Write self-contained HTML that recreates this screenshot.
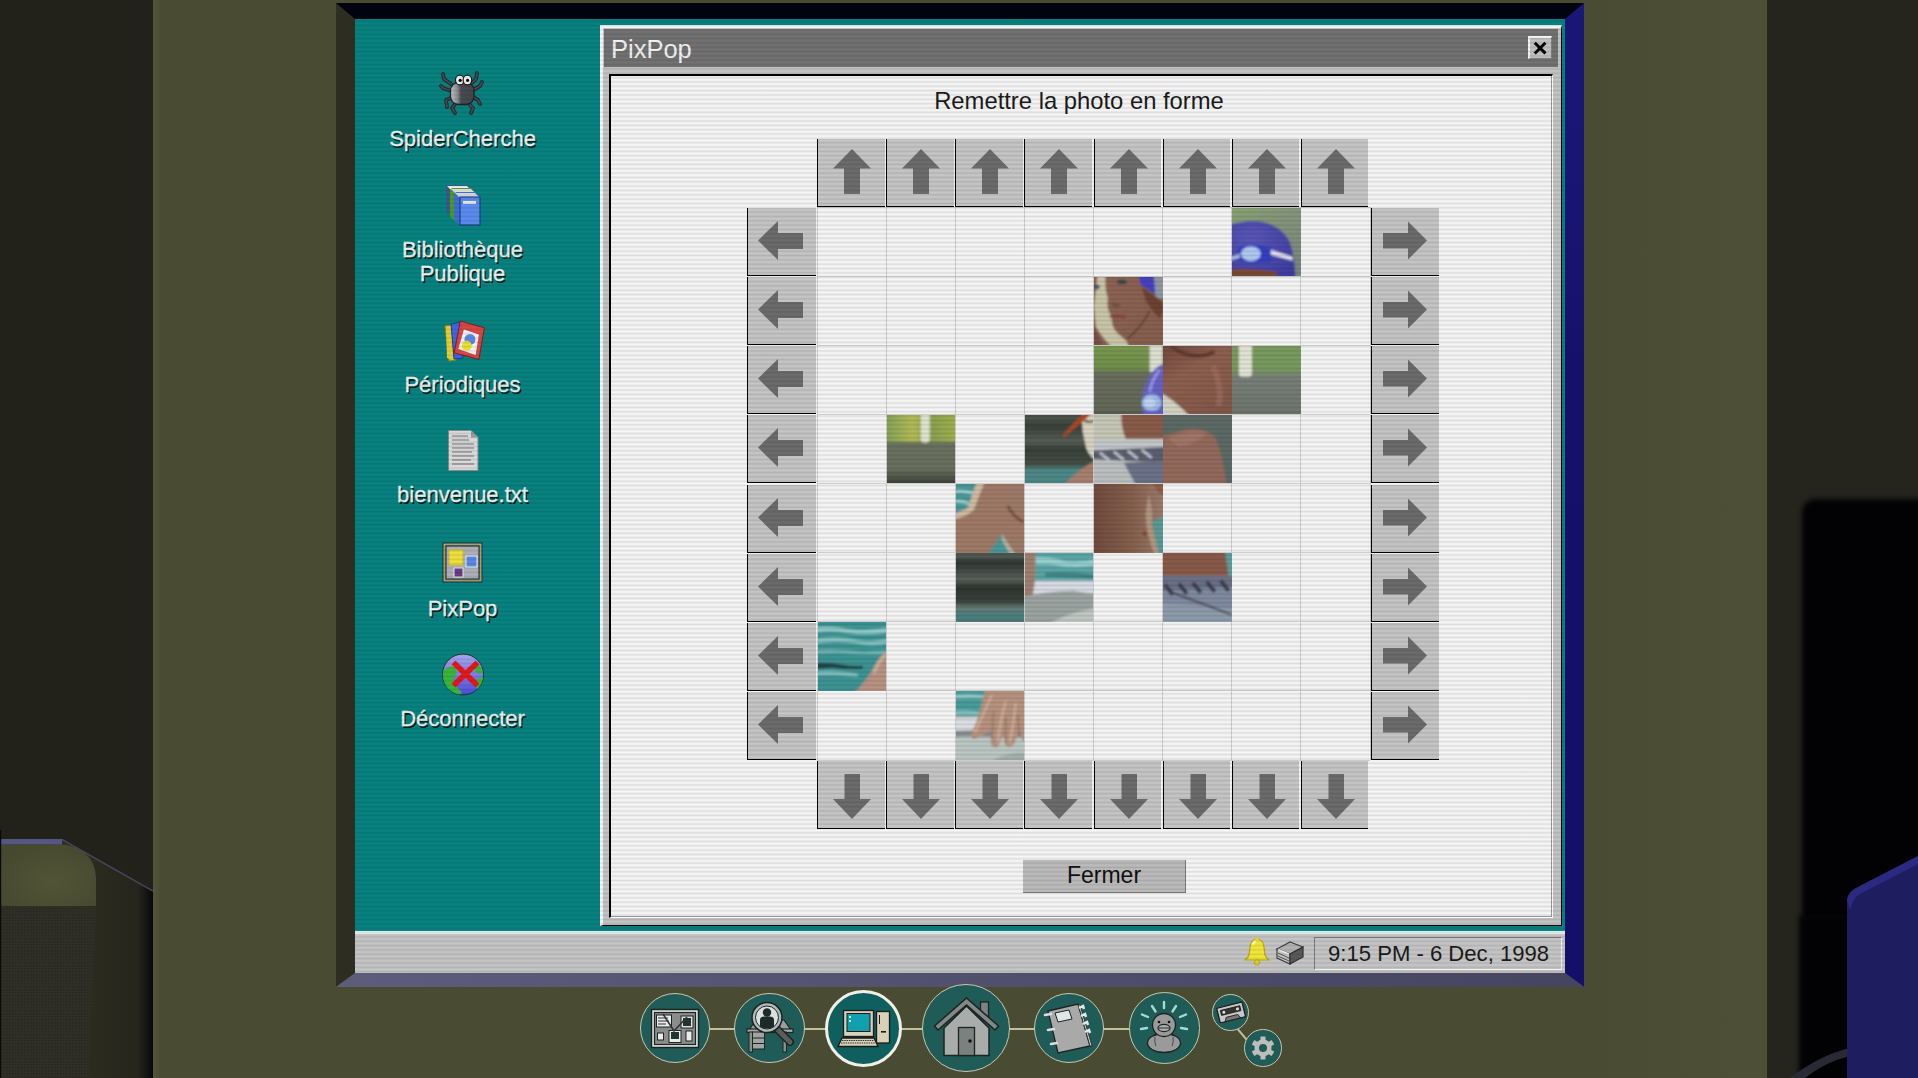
<!DOCTYPE html><html><head><meta charset="utf-8"><style>
*{margin:0;padding:0;box-sizing:border-box}
html,body{width:1918px;height:1078px;overflow:hidden;background:#4a4b33;font-family:"Liberation Sans",sans-serif}
.abs{position:absolute}
.scan-teal{background:#078381}
.scan-white{background:#f6f6f6}
.scan-gray{background:#c6c6c6}
.btn{position:absolute;border-left:1px solid #000;border-bottom:1.5px solid #000;}
.btn svg{position:absolute;left:0;top:0}
.lbl{position:absolute;color:#eef4f2;font-size:22px;text-align:center;white-space:nowrap;text-shadow:1.5px 1.5px 0.5px #042220;line-height:24px;-webkit-text-stroke:0.3px #eef6f2}
</style></head><body>
<div class="abs" style="left:0;top:0;width:153px;height:1078px;background:#22221a"></div>
<div class="abs" style="left:153px;top:0;width:8px;height:1078px;background:linear-gradient(90deg,#53553b,#4a4b33)"></div>
<div class="abs" style="left:1584px;top:0;width:183px;height:1078px;background:linear-gradient(90deg,#4a4b33,#4e4f37)"></div>
<div class="abs" style="left:1767px;top:0;width:151px;height:1078px;background:#25251d"></div>
<div class="abs" style="left:336px;top:3px;width:1248px;height:16px;background:#02030f"></div>
<div class="abs" style="left:336px;top:3px;width:19px;height:984px;background:#2d2d21;clip-path:polygon(0 0,100% 16px,100% calc(100% - 14px),0 100%)"></div>
<div class="abs" style="left:1565px;top:3px;width:19px;height:984px;background:linear-gradient(180deg,#1b1778,#15116a 40%,#14106a);clip-path:polygon(100% 0,100% 100%,0 calc(100% - 14px),0 16px)"></div>
<div class="abs" style="left:336px;top:973px;width:1248px;height:14px;background:linear-gradient(90deg,#5d5d7b,#46445f);clip-path:polygon(19px 0,calc(100% - 19px) 0,100% 100%,0 100%)"></div>
<div class="abs scan-teal" style="left:355px;top:19px;width:1210px;height:954px"></div>
<div class="lbl" style="left:362.5px;top:126.9px;width:200px">SpiderCherche</div>
<div class="lbl" style="left:362.5px;top:237.9px;width:200px">Bibliothèque</div>
<div class="lbl" style="left:362.5px;top:261.9px;width:200px">Publique</div>
<div class="lbl" style="left:362.5px;top:372.9px;width:200px">Périodiques</div>
<div class="lbl" style="left:362.5px;top:482.9px;width:200px">bienvenue.txt</div>
<div class="lbl" style="left:362.5px;top:596.6px;width:200px">PixPop</div>
<div class="lbl" style="left:362.5px;top:706.6px;width:200px">Déconnecter</div>
<svg class="abs" style="left:430px;top:65px" width="65" height="55" viewBox="430 65 65 55">
<defs><linearGradient id="spb" x1="0" y1="0" x2="1" y2="0"><stop offset="0" stop-color="#c4c4cc"/><stop offset="0.3" stop-color="#8a8a92"/><stop offset="0.45" stop-color="#4a4a52"/><stop offset="1" stop-color="#46464e"/></linearGradient></defs>
<g stroke="#26262c" stroke-width="3.8" fill="none" stroke-linecap="round" stroke-linejoin="round">
<path d="M451 84 L444 79 L443 74"/><path d="M451 91 L443 88 L441 86"/><path d="M451 98 L446 100 L447 107"/><path d="M456 103 L452 108 L455 113"/>
<path d="M472 83 L476 79 L477 73"/><path d="M473 90 L480 86 L482 82"/><path d="M473 97 L478 100 L480 104"/><path d="M468 103 L473 108 L471 113"/>
</g>
<g stroke="#4a4a52" stroke-width="1.8" fill="none" stroke-linecap="round" stroke-linejoin="round">
<path d="M451 84 L444 79 L443 74"/><path d="M451 91 L443 88 L441 86"/><path d="M451 98 L446 100 L447 107"/><path d="M456 103 L452 108 L455 113"/>
<path d="M472 83 L476 79 L477 73"/><path d="M473 90 L480 86 L482 82"/><path d="M473 97 L478 100 L480 104"/><path d="M468 103 L473 108 L471 113"/>
</g>
<rect x="450.5" y="82.5" width="23.5" height="22" rx="8" fill="url(#spb)" stroke="#222228" stroke-width="1.3"/>
<ellipse cx="459.8" cy="80" rx="4.3" ry="4.8" fill="#f4f4f4" stroke="#1a1a1a" stroke-width="1.2"/>
<ellipse cx="467.4" cy="80" rx="4.3" ry="4.8" fill="#f4f4f4" stroke="#1a1a1a" stroke-width="1.2"/>
<circle cx="460.2" cy="80.3" r="1.6" fill="#000"/><circle cx="467.6" cy="80.3" r="1.6" fill="#000"/>
</svg>
<svg class="abs" style="left:444px;top:184px" width="40" height="44" viewBox="0 0 40 44">
<path d="M2 3 L4 1 L24 1 L29 6 L29 34 L9 34 L2 28 Z" fill="#3c5a8a"/>
<path d="M3 2 L23 2 L27 6 L7 6 Z" fill="#f2f2f2"/>
<path d="M6 6 L8 4 L27 4 L32 9 L32 38 L12 38 L6 33 Z" fill="#4a9a30"/>
<path d="M7 5 L27 5 L31 9 L11 9 Z" fill="#e8e8e8"/>
<path d="M10 10 L12 8 L31 8 L36 13 L36 41 L16 41 L10 36 Z" fill="#3d6fd6"/>
<path d="M11 9 L31 9 L35 13 L15 13 Z" fill="#dedede"/>
<rect x="16" y="13" width="20" height="28" fill="#5c8cf0" stroke="#1f3f8f" stroke-width="1.2"/>
<rect x="19" y="17" width="13" height="3" fill="#e8e8f0"/>
</svg>
<svg class="abs" style="left:443px;top:320px" width="44" height="44" viewBox="0 0 44 44">
<path d="M2 6 L9 5 L13 40 L6 41 Z" fill="#e6d030" stroke="#9a8a10" stroke-width="1"/>
<path d="M3 9 L12 5 L11 40 L4 38 Z" fill="#e6d030"/>
<path d="M8 4 L17 2 L20 38 L11 39 Z" fill="#3a6ae6" stroke="#1a3a9a" stroke-width="1"/>
<path d="M17.3 1 L41.4 7.8 L35.9 39.4 L11.2 32.8 Z" fill="#d84848" stroke="#8a1a1a" stroke-width="1"/>
<path d="M20.9 9.4 L35.9 14.4 L32.6 35 L15.3 28.9 Z" fill="#f4f4f4"/>
<circle cx="27" cy="19.4" r="5.5" fill="#5a8ae8"/>
<circle cx="23.7" cy="25.8" r="5" fill="#ece030"/>
</svg>
<svg class="abs" style="left:447px;top:429px" width="33" height="43" viewBox="0 0 33 43">
<path d="M1.5 1.5 L24 1.5 L31 8.5 L31 41.5 L1.5 41.5 Z" fill="#dcdcdc" stroke="#8a8a8a" stroke-width="1"/>
<path d="M24 1.5 L24 8.5 L31 8.5 Z" fill="#9a9a9a"/>
<g stroke="#8a8a8a" stroke-width="1.3">
<path d="M5 7 H21"/><path d="M5 11 H22"/><path d="M5 15 H27"/><path d="M5 19 H27"/><path d="M5 23 H25"/><path d="M5 27 H27"/><path d="M5 31 H24"/><path d="M5 35 H27"/>
</g>
</svg>
<svg class="abs" style="left:442px;top:542px" width="42" height="42" viewBox="0 0 42 42">
<rect x="0.5" y="0.5" width="40" height="40" fill="#1e2a5a"/>
<rect x="2" y="2" width="37" height="37" fill="#7a8aa0" stroke="#d8d820" stroke-width="0.8"/>
<rect x="4" y="4" width="33" height="33" fill="#aeb2b8" stroke="#222" stroke-width="1"/>
<rect x="7" y="8" width="14" height="15" fill="#f0e040" stroke="#d4c020" stroke-width="1"/>
<rect x="24" y="14" width="11" height="11" fill="#5a8ae8" stroke="#f0f0f0" stroke-width="1"/>
<rect x="12" y="26" width="9" height="9" fill="#6a3a8a" stroke="#f0f0f0" stroke-width="1"/>
</svg>
<svg class="abs" style="left:441px;top:653px" width="44" height="44" viewBox="0 0 44 44">
<defs><linearGradient id="glb" x1="0" y1="0" x2="0" y2="1"><stop offset="0" stop-color="#a8a8f0"/><stop offset="0.5" stop-color="#8080e8"/><stop offset="1" stop-color="#4a4ae0"/></linearGradient></defs>
<circle cx="22" cy="21.5" r="20.5" fill="url(#glb)" stroke="#1e3a2a" stroke-width="1"/>
<path d="M2.5 18 Q8 12 14 14 Q18 20 12 26 Q14 34 20 38 Q22 41 18 41.5 Q4 38 2 24 Z" fill="#3ab83a"/>
<path d="M33 8 Q40 12 42 20 Q38 22 34 18 Z" fill="#3ab83a"/>
<path d="M36 26 Q40 24 42.2 24 Q41 32 36 36 Q34 30 36 26Z" fill="#3ab83a"/>
<path d="M12.5 9.5 L36.5 32.5 M36.5 9.5 L12.5 32.5" stroke="#e81818" stroke-width="5.5" stroke-linecap="butt"/>
</svg>
<div class="abs" style="left:600px;top:25px;width:962px;height:901px;background:#c4c4c4;border-top:3px solid #f4f8f8;border-left:3px solid #f4f8f8;border-right:1.5px solid #000;border-bottom:1.5px solid #000"></div>
<div class="abs" style="left:604px;top:29px;width:954px;height:38px;background:#727272"></div>
<div class="abs" style="left:611px;top:33px;color:#f4f4f4;font-size:25.5px;line-height:32px">PixPop</div>
<div class="abs" style="left:1528px;top:36px;width:24px;height:23px;background:#c2c2c2;border-top:2px solid #f6f6f6;border-left:2px solid #f6f6f6;border-right:1.5px solid #808080;border-bottom:1.5px solid #808080"><svg width="22" height="20" style="position:absolute;left:2px;top:2px"><path d="M3.8 3.8 L12.4 12.4 M12.4 3.8 L3.8 12.4" stroke="#000" stroke-width="3" stroke-linecap="square"/></svg></div>
<div class="abs scan-white" style="left:609px;top:74px;width:944px;height:844px;border-top:2px solid #000;border-left:2px solid #000;border-right:1px solid #fff;border-bottom:1px solid #fff;box-shadow:inset -1px -1px 0 #9a9a9a"></div>
<div class="abs" style="left:607px;top:86px;width:944px;text-align:center;color:#1a1a1a;font-size:23.8px;line-height:30px">Remettre la photo en forme</div>
<div class="abs" style="left:816.50px;top:207px;width:1px;height:553.00px;background:#cfcfcf"></div><div class="abs" style="left:817px;top:206.50px;width:553.00px;height:1px;background:#cfcfcf"></div><div class="abs" style="left:885.62px;top:207px;width:1px;height:553.00px;background:#cfcfcf"></div><div class="abs" style="left:817px;top:275.62px;width:553.00px;height:1px;background:#cfcfcf"></div><div class="abs" style="left:954.75px;top:207px;width:1px;height:553.00px;background:#cfcfcf"></div><div class="abs" style="left:817px;top:344.75px;width:553.00px;height:1px;background:#cfcfcf"></div><div class="abs" style="left:1023.88px;top:207px;width:1px;height:553.00px;background:#cfcfcf"></div><div class="abs" style="left:817px;top:413.88px;width:553.00px;height:1px;background:#cfcfcf"></div><div class="abs" style="left:1093.00px;top:207px;width:1px;height:553.00px;background:#cfcfcf"></div><div class="abs" style="left:817px;top:483.00px;width:553.00px;height:1px;background:#cfcfcf"></div><div class="abs" style="left:1162.12px;top:207px;width:1px;height:553.00px;background:#cfcfcf"></div><div class="abs" style="left:817px;top:552.12px;width:553.00px;height:1px;background:#cfcfcf"></div><div class="abs" style="left:1231.25px;top:207px;width:1px;height:553.00px;background:#cfcfcf"></div><div class="abs" style="left:817px;top:621.25px;width:553.00px;height:1px;background:#cfcfcf"></div><div class="abs" style="left:1300.38px;top:207px;width:1px;height:553.00px;background:#cfcfcf"></div><div class="abs" style="left:817px;top:690.38px;width:553.00px;height:1px;background:#cfcfcf"></div><div class="abs" style="left:1369.50px;top:207px;width:1px;height:553.00px;background:#cfcfcf"></div><div class="abs" style="left:817px;top:759.50px;width:553.00px;height:1px;background:#cfcfcf"></div>
<div class="btn scan-gray" style="left:817.00px;top:139px;width:67.6px;height:68px"><svg width="69" height="68"><path d="M34 10 L53 29.5 L42 29.5 L42 55 L26 55 L26 29.5 L15 29.5 Z" fill="#6c6c6c"/></svg></div><div class="btn scan-gray" style="left:817.00px;top:761px;width:67.6px;height:68px"><svg width="69" height="68"><path d="M34 58 L53 38 L42 38 L42 13 L26.5 13 L26.5 38 L15 38 Z" fill="#6c6c6c"/></svg></div><div class="btn scan-gray" style="left:747px;top:208.00px;width:68.5px;height:68px"><svg width="69" height="68"><path d="M10 32.5 L30 13 L30 25 L55 25 L55 41 L30 41 L30 52 Z" fill="#6c6c6c"/></svg></div><div class="btn scan-gray" style="left:1371px;top:208.00px;width:68px;height:68px"><svg width="69" height="68"><path d="M55 32.5 L36 13.5 L36 25 L11 25 L11 40.5 L36 40.5 L36 51.5 Z" fill="#6c6c6c"/></svg></div><div class="btn scan-gray" style="left:886.12px;top:139px;width:67.6px;height:68px"><svg width="69" height="68"><path d="M34 10 L53 29.5 L42 29.5 L42 55 L26 55 L26 29.5 L15 29.5 Z" fill="#6c6c6c"/></svg></div><div class="btn scan-gray" style="left:886.12px;top:761px;width:67.6px;height:68px"><svg width="69" height="68"><path d="M34 58 L53 38 L42 38 L42 13 L26.5 13 L26.5 38 L15 38 Z" fill="#6c6c6c"/></svg></div><div class="btn scan-gray" style="left:747px;top:277.12px;width:68.5px;height:68px"><svg width="69" height="68"><path d="M10 32.5 L30 13 L30 25 L55 25 L55 41 L30 41 L30 52 Z" fill="#6c6c6c"/></svg></div><div class="btn scan-gray" style="left:1371px;top:277.12px;width:68px;height:68px"><svg width="69" height="68"><path d="M55 32.5 L36 13.5 L36 25 L11 25 L11 40.5 L36 40.5 L36 51.5 Z" fill="#6c6c6c"/></svg></div><div class="btn scan-gray" style="left:955.25px;top:139px;width:67.6px;height:68px"><svg width="69" height="68"><path d="M34 10 L53 29.5 L42 29.5 L42 55 L26 55 L26 29.5 L15 29.5 Z" fill="#6c6c6c"/></svg></div><div class="btn scan-gray" style="left:955.25px;top:761px;width:67.6px;height:68px"><svg width="69" height="68"><path d="M34 58 L53 38 L42 38 L42 13 L26.5 13 L26.5 38 L15 38 Z" fill="#6c6c6c"/></svg></div><div class="btn scan-gray" style="left:747px;top:346.25px;width:68.5px;height:68px"><svg width="69" height="68"><path d="M10 32.5 L30 13 L30 25 L55 25 L55 41 L30 41 L30 52 Z" fill="#6c6c6c"/></svg></div><div class="btn scan-gray" style="left:1371px;top:346.25px;width:68px;height:68px"><svg width="69" height="68"><path d="M55 32.5 L36 13.5 L36 25 L11 25 L11 40.5 L36 40.5 L36 51.5 Z" fill="#6c6c6c"/></svg></div><div class="btn scan-gray" style="left:1024.38px;top:139px;width:67.6px;height:68px"><svg width="69" height="68"><path d="M34 10 L53 29.5 L42 29.5 L42 55 L26 55 L26 29.5 L15 29.5 Z" fill="#6c6c6c"/></svg></div><div class="btn scan-gray" style="left:1024.38px;top:761px;width:67.6px;height:68px"><svg width="69" height="68"><path d="M34 58 L53 38 L42 38 L42 13 L26.5 13 L26.5 38 L15 38 Z" fill="#6c6c6c"/></svg></div><div class="btn scan-gray" style="left:747px;top:415.38px;width:68.5px;height:68px"><svg width="69" height="68"><path d="M10 32.5 L30 13 L30 25 L55 25 L55 41 L30 41 L30 52 Z" fill="#6c6c6c"/></svg></div><div class="btn scan-gray" style="left:1371px;top:415.38px;width:68px;height:68px"><svg width="69" height="68"><path d="M55 32.5 L36 13.5 L36 25 L11 25 L11 40.5 L36 40.5 L36 51.5 Z" fill="#6c6c6c"/></svg></div><div class="btn scan-gray" style="left:1093.50px;top:139px;width:67.6px;height:68px"><svg width="69" height="68"><path d="M34 10 L53 29.5 L42 29.5 L42 55 L26 55 L26 29.5 L15 29.5 Z" fill="#6c6c6c"/></svg></div><div class="btn scan-gray" style="left:1093.50px;top:761px;width:67.6px;height:68px"><svg width="69" height="68"><path d="M34 58 L53 38 L42 38 L42 13 L26.5 13 L26.5 38 L15 38 Z" fill="#6c6c6c"/></svg></div><div class="btn scan-gray" style="left:747px;top:484.50px;width:68.5px;height:68px"><svg width="69" height="68"><path d="M10 32.5 L30 13 L30 25 L55 25 L55 41 L30 41 L30 52 Z" fill="#6c6c6c"/></svg></div><div class="btn scan-gray" style="left:1371px;top:484.50px;width:68px;height:68px"><svg width="69" height="68"><path d="M55 32.5 L36 13.5 L36 25 L11 25 L11 40.5 L36 40.5 L36 51.5 Z" fill="#6c6c6c"/></svg></div><div class="btn scan-gray" style="left:1162.62px;top:139px;width:67.6px;height:68px"><svg width="69" height="68"><path d="M34 10 L53 29.5 L42 29.5 L42 55 L26 55 L26 29.5 L15 29.5 Z" fill="#6c6c6c"/></svg></div><div class="btn scan-gray" style="left:1162.62px;top:761px;width:67.6px;height:68px"><svg width="69" height="68"><path d="M34 58 L53 38 L42 38 L42 13 L26.5 13 L26.5 38 L15 38 Z" fill="#6c6c6c"/></svg></div><div class="btn scan-gray" style="left:747px;top:553.62px;width:68.5px;height:68px"><svg width="69" height="68"><path d="M10 32.5 L30 13 L30 25 L55 25 L55 41 L30 41 L30 52 Z" fill="#6c6c6c"/></svg></div><div class="btn scan-gray" style="left:1371px;top:553.62px;width:68px;height:68px"><svg width="69" height="68"><path d="M55 32.5 L36 13.5 L36 25 L11 25 L11 40.5 L36 40.5 L36 51.5 Z" fill="#6c6c6c"/></svg></div><div class="btn scan-gray" style="left:1231.75px;top:139px;width:67.6px;height:68px"><svg width="69" height="68"><path d="M34 10 L53 29.5 L42 29.5 L42 55 L26 55 L26 29.5 L15 29.5 Z" fill="#6c6c6c"/></svg></div><div class="btn scan-gray" style="left:1231.75px;top:761px;width:67.6px;height:68px"><svg width="69" height="68"><path d="M34 58 L53 38 L42 38 L42 13 L26.5 13 L26.5 38 L15 38 Z" fill="#6c6c6c"/></svg></div><div class="btn scan-gray" style="left:747px;top:622.75px;width:68.5px;height:68px"><svg width="69" height="68"><path d="M10 32.5 L30 13 L30 25 L55 25 L55 41 L30 41 L30 52 Z" fill="#6c6c6c"/></svg></div><div class="btn scan-gray" style="left:1371px;top:622.75px;width:68px;height:68px"><svg width="69" height="68"><path d="M55 32.5 L36 13.5 L36 25 L11 25 L11 40.5 L36 40.5 L36 51.5 Z" fill="#6c6c6c"/></svg></div><div class="btn scan-gray" style="left:1300.88px;top:139px;width:67.6px;height:68px"><svg width="69" height="68"><path d="M34 10 L53 29.5 L42 29.5 L42 55 L26 55 L26 29.5 L15 29.5 Z" fill="#6c6c6c"/></svg></div><div class="btn scan-gray" style="left:1300.88px;top:761px;width:67.6px;height:68px"><svg width="69" height="68"><path d="M34 58 L53 38 L42 38 L42 13 L26.5 13 L26.5 38 L15 38 Z" fill="#6c6c6c"/></svg></div><div class="btn scan-gray" style="left:747px;top:691.88px;width:68.5px;height:68px"><svg width="69" height="68"><path d="M10 32.5 L30 13 L30 25 L55 25 L55 41 L30 41 L30 52 Z" fill="#6c6c6c"/></svg></div><div class="btn scan-gray" style="left:1371px;top:691.88px;width:68px;height:68px"><svg width="69" height="68"><path d="M55 32.5 L36 13.5 L36 25 L11 25 L11 40.5 L36 40.5 L36 51.5 Z" fill="#6c6c6c"/></svg></div>
<svg width="0" height="0" style="position:absolute"><defs><filter id="tb" x="-20%" y="-20%" width="140%" height="140%"><feGaussianBlur stdDeviation="1.1"/></filter></defs></svg><svg class="abs" style="left:1232.25px;top:207.50px" width="68.6" height="68.6" viewBox="0 0 69 69" preserveAspectRatio="none"><defs><linearGradient id="g06" x1="0" y1="0" x2="0.4" y2="1"><stop offset="0" stop-color="#8aa870"/><stop offset="0.35" stop-color="#86987a"/><stop offset="1" stop-color="#7c8680"/></linearGradient>
<radialGradient id="c06" cx="0.35" cy="0.3" r="0.8"><stop offset="0" stop-color="#5a58b8"/><stop offset="1" stop-color="#3e3ca0"/></radialGradient></defs><g filter="url(#tb)">
<rect x="-5" y="-5" width="79" height="79" fill="url(#g06)"/>
<path d="M-5 74 L-5 18 Q8 13 22 13 Q46 14 57 32 Q63 45 64 74 Z" fill="url(#c06)"/>
<path d="M-5 62 Q20 60 45 64 L46 74 L-5 74 Z" fill="#7a4a30"/>
<path d="M6 40 Q20 34 40 40 L40 54 Q20 58 6 52 Z" fill="#3440c0"/>
<ellipse cx="19" cy="46" rx="10" ry="7.5" fill="#b0c8f0"/>
<path d="M39 42 L61 49 L61 53 L39 47 Z" fill="#e0e0ee"/>
<path d="M-5 50 L8 46 L8 50 L-5 54Z" fill="#a8b8e8"/></g></svg><svg class="abs" style="left:1094.00px;top:276.62px" width="68.6" height="68.6" viewBox="0 0 69 69" preserveAspectRatio="none"><defs><linearGradient id="g14" x1="0" y1="0" x2="1" y2="1"><stop offset="0" stop-color="#906454"/><stop offset="1" stop-color="#85604f"/></linearGradient></defs><g filter="url(#tb)">
<rect x="-5" y="-5" width="79" height="79" fill="url(#g14)"/>
<path d="M4 -5 L12 -5 Q10 10 14 22 Q12 32 18 40 Q16 52 30 62 Q36 66 34 74 L22 74 Q10 64 2 50 L0 30 Q2 12 4 -5 Z" fill="#cac6aa"/>
<path d="M-5 45 Q5 55 10 74 L-5 74 Z" fill="#7a5048"/>
<ellipse cx="28" cy="5" rx="5" ry="2.5" fill="#3a4a50"/>
<ellipse cx="2" cy="10" rx="4" ry="2.5" fill="#4a5a66"/>
<path d="M16 40 Q24 38 32 41" stroke="#8a4040" stroke-width="2.5" fill="none"/>
<path d="M18 27 Q22 30 26 28" stroke="#6a4438" stroke-width="2" fill="none"/>
<path d="M44 -5 L62 -5 L62 18 Q54 12 47 8 Z" fill="#4442c0"/>
<path d="M60 -5 L74 -5 L74 22 L62 22 Z" fill="#9298a0"/>
<path d="M48 10 Q60 18 68 24 Q72 32 66 42 Q58 34 52 24 Z" fill="#6e4230"/>
<path d="M56 34 Q48 50 34 62" stroke="#5e3a30" stroke-width="1.5" fill="none"/></g></svg><svg class="abs" style="left:1094.00px;top:345.75px" width="68.6" height="68.6" viewBox="0 0 69 69" preserveAspectRatio="none"><defs><linearGradient id="g24" x1="0" y1="0" x2="0" y2="1"><stop offset="0" stop-color="#7a9a50"/><stop offset="0.34" stop-color="#72904c"/><stop offset="0.42" stop-color="#6a6e5e"/><stop offset="0.88" stop-color="#646858"/><stop offset="1" stop-color="#44483e"/></linearGradient></defs><g filter="url(#tb)">
<rect x="-5" y="-5" width="79" height="79" fill="url(#g24)"/>
<rect x="56" y="-5" width="13" height="31" fill="#dde0d2"/>
<path d="M74 17 Q62 18 55 32 Q48 46 48 58 Q49 68 52 74 L74 74 Z" fill="#6664c4"/>
<path d="M66 24 Q58 34 56 46" stroke="#9a98e0" stroke-width="3" fill="none"/>
<ellipse cx="58" cy="57" rx="10" ry="8.5" fill="#a0bce8"/>
<ellipse cx="56" cy="57" rx="6" ry="5" fill="#c0d4f0"/></g></svg><svg class="abs" style="left:1163.12px;top:345.75px" width="68.6" height="68.6" viewBox="0 0 69 69" preserveAspectRatio="none"><defs><linearGradient id="g25" x1="0" y1="0" x2="0.6" y2="1"><stop offset="0" stop-color="#6e4538"/><stop offset="0.45" stop-color="#8e6050"/><stop offset="1" stop-color="#84584a"/></linearGradient></defs><g filter="url(#tb)">
<rect x="-5" y="-5" width="79" height="79" fill="url(#g25)"/>
<path d="M-5 46 Q10 52 30 74 L-5 74 Z" fill="#d4d4c4"/>
<path d="M8 0 Q28 16 52 6" stroke="#5e3a2e" stroke-width="4" fill="none"/>
<path d="M50 20 Q60 40 56 60" stroke="#a07464" stroke-width="6" fill="none" opacity="0.6"/></g></svg><svg class="abs" style="left:1232.25px;top:345.75px" width="68.6" height="68.6" viewBox="0 0 69 69" preserveAspectRatio="none"><defs><linearGradient id="g26" x1="0" y1="0" x2="0" y2="1"><stop offset="0" stop-color="#7a9c5e"/><stop offset="0.36" stop-color="#789a60"/><stop offset="0.46" stop-color="#78807a"/><stop offset="0.9" stop-color="#707670"/><stop offset="1" stop-color="#5c625c"/></linearGradient></defs><g filter="url(#tb)">
<rect x="-5" y="-5" width="79" height="79" fill="url(#g26)"/>
<rect x="7" y="-5" width="13" height="36" rx="3" fill="#e2e4d6"/></g></svg><svg class="abs" style="left:886.62px;top:414.88px" width="68.6" height="68.6" viewBox="0 0 69 69" preserveAspectRatio="none"><defs><linearGradient id="g31" x1="0" y1="0" x2="1" y2="0"><stop offset="0" stop-color="#7e9e58"/><stop offset="0.4" stop-color="#b4bc58"/><stop offset="0.6" stop-color="#8aa050"/><stop offset="1" stop-color="#a4b450"/></linearGradient>
<linearGradient id="h31" x1="0" y1="0" x2="0" y2="1"><stop offset="0" stop-color="#6c7460"/><stop offset="0.75" stop-color="#6a705e"/><stop offset="1" stop-color="#2c3230"/></linearGradient></defs><g filter="url(#tb)">
<rect x="-5" y="-5" width="79" height="79" fill="url(#h31)"/>
<rect x="-5" y="-5" width="79" height="32" fill="url(#g31)"/>
<rect x="34" y="-5" width="9" height="33" rx="4" fill="#e0e4d2"/></g></svg><svg class="abs" style="left:1024.88px;top:414.88px" width="68.6" height="68.6" viewBox="0 0 69 69" preserveAspectRatio="none"><defs><linearGradient id="g33" x1="0" y1="0" x2="0" y2="1"><stop offset="0" stop-color="#3a403a"/><stop offset="0.1" stop-color="#4e564e"/><stop offset="0.2" stop-color="#3a403a"/><stop offset="0.4" stop-color="#565e56"/><stop offset="0.5" stop-color="#384038"/><stop offset="0.7" stop-color="#465048"/><stop offset="0.76" stop-color="#4e8a88"/><stop offset="1" stop-color="#4a8886"/></linearGradient></defs><g filter="url(#tb)">
<rect x="-5" y="-5" width="79" height="79" fill="url(#g33)"/>
<path d="M36 74 Q50 56 74 44 L74 74 Z" fill="#a88070"/>
<path d="M58 -5 L74 -5 L74 47 Q62 42 60 26 Q56 12 58 -5 Z" fill="#d8d4c0"/>
<path d="M38 20 Q48 8 60 -2 L70 -5 Q60 6 54 10 Q46 16 40 22 Z" fill="#b04a20"/>
<path d="M60 6 Q66 8 69 6" stroke="#2a3a3a" stroke-width="2" fill="none"/></g></svg><svg class="abs" style="left:1094.00px;top:414.88px" width="68.6" height="68.6" viewBox="0 0 69 69" preserveAspectRatio="none"><g filter="url(#tb)"><rect x="-5" y="-5" width="79" height="79" fill="#b8bcbc"/>
<path d="M-5 -5 L74 -5 L74 25 L-5 27 Z" fill="#c8c8b8"/>
<path d="M28 -5 L74 -5 L74 24 L32 24 Q26 10 28 -5 Z" fill="#8a5c4a"/>
<path d="M-5 26 L74 24 L74 36 L-5 38 Z" fill="#c4c8cc"/>
<path d="M-5 36 L74 32 L74 48 L-5 44 Z" fill="#5a6070"/>
<path d="M6 38 L16 46 M20 37 L30 45 M34 36 L44 44 M48 35 L58 43" stroke="#c8ccd4" stroke-width="2.5"/>
<path d="M30 48 L74 46 L74 74 L44 74 Z" fill="#6c7288"/>
<path d="M-5 46 L30 48 Q36 62 44 74 L-5 74 Z" fill="#bcc0c0"/></g></svg><svg class="abs" style="left:1163.12px;top:414.88px" width="68.6" height="68.6" viewBox="0 0 69 69" preserveAspectRatio="none"><g filter="url(#tb)"><rect x="-5" y="-5" width="79" height="79" fill="#5c6a66"/>
<path d="M-5 74 L-5 22 Q10 18 24 14 Q42 12 52 22 Q60 36 64 74 Z" fill="#946a5c"/>
<path d="M4 24 Q24 14 44 18 Q36 28 16 32 Z" fill="#a87c6c" opacity="0.7"/></g></svg><svg class="abs" style="left:955.75px;top:484.00px" width="68.6" height="68.6" viewBox="0 0 69 69" preserveAspectRatio="none"><g filter="url(#tb)"><rect x="-5" y="-5" width="79" height="79" fill="#4c9898"/>
<path d="M-5 8 Q10 6 20 10 M-5 18 Q6 16 14 20" stroke="#a8dcdc" stroke-width="2.5" fill="none"/>
<path d="M22 -5 L74 -5 L74 74 L62 74 L46 50 L30 74 L-5 74 L-5 30 Q6 28 12 24 Q16 10 22 -5 Z" fill="#a07a68"/>
<path d="M22 -5 Q16 10 12 24 Q6 28 -5 30 L-5 36 Q10 34 18 26 Q24 10 30 -5 Z" fill="#d0bca4"/>
<path d="M46 50 L62 74 L56 74 L46 56 Z" fill="#d0bca4" opacity="0.8"/>
<path d="M52 22 Q58 34 68 38" stroke="#7a5040" stroke-width="3" fill="none"/></g></svg><svg class="abs" style="left:1094.00px;top:484.00px" width="68.6" height="68.6" viewBox="0 0 69 69" preserveAspectRatio="none"><defs><linearGradient id="g44" x1="0" y1="0" x2="1" y2="0"><stop offset="0" stop-color="#6e4a3c"/><stop offset="0.55" stop-color="#86604e"/><stop offset="1" stop-color="#a08070"/></linearGradient></defs><g filter="url(#tb)">
<rect x="-5" y="-5" width="79" height="79" fill="url(#g44)"/>
<path d="M58 38 L74 30 L74 74 L66 74 Z" fill="#5a9a98"/>
<path d="M55 10 Q60 30 58 40 L66 74 L62 74 Q52 50 52 30 Z" fill="#c0a890" opacity="0.7"/>
<path d="M58 -5 L74 -5 L74 12 Q62 12 58 -5Z" fill="#8e5e4a"/>
<circle cx="51" cy="50" r="2.5" fill="#8a4a38"/></g></svg><svg class="abs" style="left:955.75px;top:553.12px" width="68.6" height="68.6" viewBox="0 0 69 69" preserveAspectRatio="none"><defs><linearGradient id="g52" x1="0" y1="0" x2="0" y2="1"><stop offset="0" stop-color="#2e3430"/><stop offset="0.1" stop-color="#56605a"/><stop offset="0.18" stop-color="#2e3430"/><stop offset="0.4" stop-color="#5a625c"/><stop offset="0.5" stop-color="#2e3430"/><stop offset="0.68" stop-color="#3a423e"/><stop offset="0.76" stop-color="#6a7a74"/><stop offset="0.84" stop-color="#4e807e"/><stop offset="1" stop-color="#4a7c7c"/></linearGradient></defs><g filter="url(#tb)">
<rect x="-5" y="-5" width="79" height="79" fill="url(#g52)"/></g></svg><svg class="abs" style="left:1024.88px;top:553.12px" width="68.6" height="68.6" viewBox="0 0 69 69" preserveAspectRatio="none"><g filter="url(#tb)"><rect x="-5" y="-5" width="79" height="79" fill="#c0c8c4"/>
<rect x="-5" y="-5" width="79" height="34" fill="#5aa6a6"/>
<path d="M-5 6 Q20 2 40 8 Q55 10 74 6 L74 12 Q50 16 30 12 Q12 10 -5 14Z" fill="#a8dcdc" opacity="0.8"/>
<path d="M20 20 Q40 18 74 22 L74 26 Q40 24 20 24 Z" fill="#2e6a6a" opacity="0.6"/>
<path d="M-5 28 L74 28 L74 40 L-5 42 Z" fill="#d8dce4"/>
<path d="M-5 44 Q30 38 48 38 L74 42 L74 55 Q40 60 20 74 L-5 74 Z" fill="#9ca4a2"/>
<path d="M-5 0 L10 -5 Q12 20 8 42 L-5 44 Z" fill="#a08070"/></g></svg><svg class="abs" style="left:1163.12px;top:553.12px" width="68.6" height="68.6" viewBox="0 0 69 69" preserveAspectRatio="none"><g filter="url(#tb)"><rect x="-5" y="-5" width="79" height="79" fill="#808aa0"/>
<rect x="-5" y="-5" width="79" height="28" fill="#8a5a48"/>
<path d="M62 -5 L74 -5 L74 23 L66 23Z" fill="#5aa0a0"/>
<path d="M-5 24 L74 24 L74 34 L-5 38 Z" fill="#6a7088"/>
<path d="M2 32 L10 42 M16 31 L24 41 M30 30 L38 40 M44 29 L52 39 M58 28 L66 38" stroke="#3a3c4a" stroke-width="4"/>
<path d="M-5 50 L74 56 L74 74 L-5 74 Z" fill="#8e9cac"/>
<path d="M10 40 L69 62" stroke="#4a4858" stroke-width="2"/></g></svg><svg class="abs" style="left:817.50px;top:622.25px" width="68.6" height="68.6" viewBox="0 0 69 69" preserveAspectRatio="none"><g filter="url(#tb)"><rect x="-5" y="-5" width="79" height="79" fill="#3e9494"/>
<path d="M-5 6 Q10 3 30 7 Q50 10 74 5 L74 10 Q50 14 30 11 Q10 8 -5 11 Z" fill="#b0e0e0" opacity="0.75"/>
<path d="M-5 17 Q20 13 40 18 Q55 21 74 16 L74 21 Q55 25 40 22 Q20 18 -5 22 Z" fill="#a0d8d8" opacity="0.7"/>
<path d="M-5 28 Q20 26 45 30 L74 28 L74 32 Q45 34 20 31 L-5 32 Z" fill="#a0d8d8" opacity="0.5"/>
<path d="M-5 42 Q10 40 25 43 Q35 45 45 44 L45 47 Q30 48 15 46 L-5 47 Z" fill="#22403e"/>
<path d="M-5 50 Q15 48 40 52 L40 55 Q15 52 -5 54 Z" fill="#b0e0e0" opacity="0.6"/>
<path d="M74 28 Q64 30 58 42 Q50 58 34 74 L74 74 Z" fill="#b89484"/>
<path d="M69 32 Q60 40 56 52" stroke="#d8c0a8" stroke-width="3" fill="none" opacity="0.7"/></g></svg><svg class="abs" style="left:955.75px;top:691.38px" width="68.6" height="68.6" viewBox="0 0 69 69" preserveAspectRatio="none"><g filter="url(#tb)"><rect x="-5" y="-5" width="79" height="79" fill="#b8c4c0"/>
<rect x="-5" y="-5" width="79" height="30" fill="#4a9c9c"/>
<path d="M-5 4 Q15 2 35 5 L35 8 Q15 6 -5 8 Z" fill="#b0e0e0" opacity="0.7"/>
<path d="M-5 20 Q15 18 30 22 L30 25 Q15 22 -5 24 Z" fill="#b0e0e0" opacity="0.6"/>
<path d="M-5 28 L74 26 L74 44 L-5 44 Z" fill="#dce0e4"/>
<path d="M-5 40 L74 38 L74 46 L-5 46 Z" fill="#3a4040" opacity="0.5"/>
<path d="M-5 46 Q35 44 74 50 L74 74 L-5 74 Z" fill="#bcc8c4"/>
<path d="M30 74 Q50 60 74 62 L74 74 Z" fill="#a4b0ac"/>
<path d="M30 -5 L74 -5 L74 46 Q72 52 67 50 L64 40 L58 54 Q53 58 49 54 L48 42 L43 55 Q38 59 35 53 L35 40 L22 47 Q15 50 15 44 L21 30 Q26 14 30 -5 Z" fill="#b89280"/>
<path d="M36 4 Q28 22 19 42 M50 10 Q44 32 42 52 M60 12 Q58 34 54 52" stroke="#d8bca4" stroke-width="2.5" fill="none" opacity="0.7"/>
<path d="M38 20 L36 48 M50 26 L50 50 M62 24 L64 46" stroke="#7a5a4a" stroke-width="1.2" fill="none" opacity="0.6"/></g></svg>
<div class="abs" style="background:#bcbcbc;left:1023px;top:860px;width:163px;height:33px;border-right:1.5px solid #7a7a7a;border-bottom:1.5px solid #7a7a7a;color:#111;font-size:23px;line-height:31px;text-align:center;padding-left:0px">Fermer</div>
<div class="abs scan-gray" style="left:355px;top:931px;width:1210px;height:42px;border-top:3px solid #eef6f6"></div>
<div class="abs" style="left:1314px;top:937px;width:248px;height:33px;border-top:1px solid #7c7c7c;border-left:1px solid #7c7c7c;border-right:1.5px solid #f4f4f4;border-bottom:1.5px solid #f4f4f4;color:#1a1a1a;font-size:22.1px;line-height:31px;padding-left:13px;white-space:nowrap">9:15 PM - 6 Dec, 1998</div>
<svg class="abs" style="left:1243px;top:937px" width="28" height="29" viewBox="0 0 28 29">
<path d="M14 2 Q8 2 7 10 L6 18 Q5 21 2 23 L26 23 Q23 21 22 18 L21 10 Q20 2 14 2 Z" fill="#f2e838" stroke="#b8a818" stroke-width="1.2"/>
<path d="M10 8 Q10 5 13 4" stroke="#fffac8" stroke-width="2" fill="none"/>
<circle cx="14" cy="25.5" r="2.6" fill="#e8d820" stroke="#b8a818" stroke-width="1"/>
<rect x="12.5" y="0.5" width="3" height="3" fill="#e8d820"/>
</svg>
<svg class="abs" style="left:1275px;top:939px" width="30" height="27" viewBox="0 0 30 27">
<path d="M2 10 L15 3 L28 8 L15 15 Z" fill="#b4b4b4" stroke="#444" stroke-width="1.2"/>
<path d="M2 10 L15 15 L15 25 L2 19 Z" fill="#c8c8c8" stroke="#444" stroke-width="1.2"/>
<path d="M15 15 L28 8 L28 18 L15 25 Z" fill="#5a5a5a" stroke="#333" stroke-width="1.2"/>
<path d="M3 14 L14 19 M3 17 L14 22" stroke="#555" stroke-width="1"/>
<path d="M3 10.5 L14 15" stroke="#f0f0f0" stroke-width="1.4"/>
</svg>
<div class="abs" style="left:355px;top:19px;width:1210px;height:954px;pointer-events:none;background:repeating-linear-gradient(180deg,rgba(0,0,0,0) 0px,rgba(0,0,0,0.02) 0.7px,rgba(0,0,0,0.1) 2.17px,rgba(0,0,0,0.02) 3.64px,rgba(0,0,0,0) 4.34px)"></div>
<svg class="abs" style="left:0;top:830px" width="153" height="248" viewBox="0 0 153 248">
<defs>
<linearGradient id="spkside" x1="0" y1="0" x2="1" y2="0"><stop offset="0" stop-color="#37381f"/><stop offset="0.55" stop-color="#2c2c1f"/><stop offset="0.9" stop-color="#25251c"/><stop offset="1" stop-color="#08080c"/></linearGradient>
<radialGradient id="spktop" cx="0.55" cy="0.6" r="0.7"><stop offset="0" stop-color="#525436"/><stop offset="1" stop-color="#46482f"/></radialGradient>
<pattern id="mesh" width="3" height="3" patternUnits="userSpaceOnUse"><rect width="3" height="3" fill="#2f2e27"/><rect width="1.5" height="1.5" fill="#27261f"/></pattern>
</defs>
<path d="M0 9 L62 9 L153 61 L153 248 L0 248 Z" fill="url(#spkside)"/>
<path d="M62 9.5 L153 61" stroke="#444460" stroke-width="1.5"/>
<rect x="1" y="9" width="61" height="5.5" fill="#565684"/>
<path d="M1 14.5 L64 14.5 Q95 20 96 48 L96 76 L1 76 Z" fill="url(#spktop)"/>
<path d="M1 76 L96 77 L89 248 L1 248 Z" fill="url(#mesh)"/>
<rect x="0" y="0" width="1.2" height="248" fill="#0a0a0a"/>
</svg>
<div class="abs" style="left:1802px;top:499px;width:140px;height:420px;background:#020204;border-radius:14px 0 0 0;filter:blur(2.5px)"></div>
<div class="abs" style="left:1799px;top:916px;width:140px;height:200px;background:#020204;filter:blur(2.5px)"></div>
<svg class="abs" style="left:1780px;top:840px" width="138" height="238" viewBox="0 0 138 238">
<path d="M10 238 Q40 215 70 208 L70 216 Q45 222 25 238 Z" fill="#2a2a34"/>
<path d="M67 238 L67 60 Q68 52 76 48 L138 16 L138 238 Z" fill="#1e1d60"/>
<path d="M67 60 Q68 52 76 48 L138 16 L138 24 L78 55 Q72 60 70 70 Z" fill="#2b2a80"/>
</svg>
<div class="abs" style="left:700px;top:1027.5px;width:440px;height:2px;background:#c4c09e"></div>
<div class="abs" style="left:1240px;top:1020px;width:2px;height:26px;background:#c4c09e;transform:rotate(-40deg);transform-origin:center"></div>
<div class="abs" style="left:640px;top:993px;width:70px;height:70px;border-radius:50%;background:#1f5c57;border:1.6px solid #c8c8b0"></div>
<div class="abs" style="left:734.3px;top:992.8px;width:70.4px;height:70.4px;border-radius:50%;background:#1f5c57;border:1.6px solid #c8c8b0"></div>
<div class="abs" style="left:825.0px;top:989.5px;width:77.0px;height:77.0px;border-radius:50%;background:#0f5f5e;border:3.2px solid #f2f0e6"></div>
<div class="abs" style="left:922.2px;top:984px;width:88px;height:88px;border-radius:50%;background:#1f5c57;border:1.6px solid #c8c8b0"></div>
<div class="abs" style="left:1034px;top:993px;width:70px;height:70px;border-radius:50%;background:#1f5c57;border:1.6px solid #c8c8b0"></div>
<div class="abs" style="left:1128.6000000000001px;top:992.4px;width:71.2px;height:71.2px;border-radius:50%;background:#1f5c57;border:1.6px solid #c8c8b0"></div>
<div class="abs" style="left:1212.1px;top:994.0px;width:37.4px;height:37.4px;border-radius:50%;background:#1f5c57;border:1.6px solid #c8c8b0"></div>
<div class="abs" style="left:1244.2px;top:1029.1000000000001px;width:37.6px;height:37.6px;border-radius:50%;background:#1f5c57;border:1.6px solid #c8c8b0"></div>
<svg class="abs" style="left:650px;top:1008px" width="50" height="41" viewBox="0 0 50 41">
<rect x="1.5" y="1.5" width="47" height="38" fill="#dfe3de" stroke="#1a2422" stroke-width="1.5"/>
<rect x="4.5" y="4.5" width="41" height="32" fill="#8c8c8a" stroke="#1a2422" stroke-width="1.2"/>
<rect x="6.5" y="7" width="15" height="12" fill="#e8ecec" stroke="#1a2422" stroke-width="1"/>
<path d="M8 10 H18 M8 13 H19 M8 16 H16" stroke="#333" stroke-width="1"/>
<rect x="31" y="8" width="12" height="12" fill="#dfe3de" stroke="#1a2422" stroke-width="1"/>
<rect x="33" y="10" width="8" height="8" fill="#233"/>
<rect x="7.5" y="25" width="6" height="7" fill="#e8ecec" stroke="#1a2422" stroke-width="1"/>
<rect x="19" y="22.5" width="12" height="12" fill="#e8ecec" stroke="#1a2422" stroke-width="1"/>
<rect x="21" y="24" width="8" height="7" fill="#233"/>
<rect x="36" y="23" width="6" height="10" fill="#e8ecec" stroke="#1a2422" stroke-width="1"/>
<path d="M13 6 L24 23 L37 9" stroke="#333" stroke-width="1.6" fill="none"/>
</svg>
<svg class="abs" style="left:744px;top:1000px" width="52" height="54" viewBox="0 0 52 54">
<path d="M5 30 L12 20 L40 20 L47 30 Z" fill="#9a9e9c" stroke="#1a2422" stroke-width="1.2"/>
<rect x="3" y="29" width="46" height="3.5" fill="#a8acaa" stroke="#1a2422" stroke-width="1.2"/>
<rect x="5" y="32" width="3.5" height="20" fill="#8a8e8c" stroke="#1a2422" stroke-width="1"/>
<rect x="39" y="32" width="3.5" height="20" fill="#8a8e8c" stroke="#1a2422" stroke-width="1"/>
<rect x="8.5" y="32" width="12" height="17" fill="#a0a4a2" stroke="#1a2422" stroke-width="1"/>
<path d="M8.5 38 H20.5 M8.5 43.5 H20.5" stroke="#1a2422" stroke-width="1"/>
<path d="M32 28 L46 42" stroke="#1a2422" stroke-width="8" stroke-linecap="round"/>
<path d="M32 28 L46 42" stroke="#5c5c5c" stroke-width="5" stroke-linecap="round"/>
<circle cx="23" cy="17.5" r="15" fill="#b4b8b6" stroke="#1a2422" stroke-width="1.5"/>
<circle cx="23" cy="17.5" r="11.5" fill="#d8e0e0" stroke="#1a2422" stroke-width="1"/>
<circle cx="23" cy="12.5" r="4.2" fill="#1e2a2a"/>
<path d="M16 27 L16 20 Q16 16.5 20 16.5 L26 16.5 Q30 16.5 30 20 L30 27 Q23 30 16 27 Z" fill="#1e2a2a"/>
</svg>
<svg class="abs" style="left:837px;top:1009px" width="54" height="39" viewBox="0 0 54 39">
<rect x="6.5" y="1.5" width="30" height="26" fill="#d8d0b8" stroke="#1a1a1a" stroke-width="1.3"/>
<rect x="10" y="4.5" width="23" height="18" fill="#12a0ae" stroke="#1a1a1a" stroke-width="1"/>
<rect x="12" y="7" width="2" height="2" fill="#c8f0f0"/><rect x="12" y="11" width="2" height="2" fill="#c8f0f0"/>
<rect x="39.5" y="2.5" width="13" height="31.5" fill="#d8d0b8" stroke="#1a1a1a" stroke-width="1.3"/>
<path d="M42.5 6 V15" stroke="#1a1a1a" stroke-width="1"/><rect x="44" y="22" width="5" height="1.6" fill="#1a1a1a"/>
<path d="M5 29 L37 29 L41 37.5 L1 37.5 Z" fill="#d8d0b8" stroke="#1a1a1a" stroke-width="1.3"/>
<path d="M5 31.5 H37 M4 34 H38" stroke="#333" stroke-width="1.1" stroke-dasharray="1.5 0.8"/>
</svg>
<svg class="abs" style="left:933px;top:995px" width="68" height="63" viewBox="0 0 68 63">
<rect x="47.5" y="7" width="8" height="18" fill="#7e8280" stroke="#1a2422" stroke-width="1.3"/>
<path d="M11 33 L11 60.5 L56 60.5 L56 33 L33.5 11 Z" fill="#a8acaa" stroke="#1a2422" stroke-width="1.5"/>
<rect x="25.5" y="32.5" width="16" height="28" fill="#7c807e" stroke="#1a2422" stroke-width="1.3"/>
<circle cx="37" cy="46" r="1.8" fill="#111"/>
<path d="M1.5 31 L33.5 3 L65.5 31 L62 35 L33.5 10 L5 35 Z" fill="#838785" stroke="#1a2422" stroke-width="1.5" stroke-linejoin="miter"/>
</svg>
<svg class="abs" style="left:1042px;top:1000px" width="54" height="58" viewBox="0 0 54 58">
<path d="M6 11 L36 4 L48 46 L16 53 Z" fill="#a9a9a9" stroke="#1a2422" stroke-width="1.3"/>
<path d="M36 4 L38 5 L50 46 L48 46 Z" fill="#d8d8d8" stroke="#1a2422" stroke-width="0.8"/>
<path d="M13 13 L27 10 L30 19 L16 22 Z" fill="#dfe6e6" stroke="#1a2422" stroke-width="1"/>
<path d="M37 8 L41 6 L42 9 M39 16 L43 14 L44 17 M41 24 L45 22 L46 25 M43 32 L47 30 L48 33" stroke="#e8e8e8" stroke-width="2.5" fill="none"/>
<path d="M3 15 L9 14 M6 30 L12 29 M9 44 L15 43" stroke="#ddd" stroke-width="2.5" stroke-linecap="round"/>
</svg>
<svg class="abs" style="left:1136px;top:1000px" width="56" height="56" viewBox="0 0 56 56">
<g stroke="#a4dcd4" stroke-width="2.4" stroke-linecap="round">
<path d="M28 2 V8"/><path d="M16 6 L19.5 11.5"/><path d="M40 6 L36.5 11.5"/><path d="M6 14.5 L12 17"/><path d="M50 14.5 L44 17"/><path d="M5 29 L11 28"/><path d="M51 29 L45 28"/>
</g>
<ellipse cx="28" cy="43" rx="16.5" ry="9.5" fill="#9a9a9a" stroke="#1a2422" stroke-width="1.3"/>
<path d="M19 37 Q18 42 20 46 M37 37 Q38 42 36 46" stroke="#333" stroke-width="0.8" fill="none"/>
<circle cx="28" cy="25" r="11.5" fill="#9a9a9a" stroke="#1a2422" stroke-width="1.3"/>
<circle cx="23" cy="22" r="1.3" fill="#111"/><circle cx="33" cy="22" r="1.3" fill="#111"/>
<ellipse cx="28" cy="28" rx="6" ry="3.6" fill="#b0b0b0" stroke="#1a2422" stroke-width="1.2"/>
<path d="M22.5 28 H33.5" stroke="#1a2422" stroke-width="0.9"/>
</svg>
<svg class="abs" style="left:1216px;top:1001px" width="30" height="22" viewBox="0 0 30 22">
<g transform="rotate(-14 15 11)">
<rect x="2" y="4" width="26" height="15" fill="#c8c8c8" stroke="#1a1a1a" stroke-width="1.2"/>
<rect x="5" y="7" width="20" height="5" fill="#333" stroke="#1a1a1a" stroke-width="0.8"/>
<circle cx="8" cy="9.5" r="1.5" fill="#ddd"/><circle cx="22" cy="9.5" r="1.5" fill="#ddd"/>
<path d="M7 19 L9 15 L21 15 L23 19 Z" fill="#777" stroke="#1a1a1a" stroke-width="0.8"/>
</g>
</svg>
<svg class="abs" style="left:1250px;top:1035px" width="26" height="26" viewBox="0 0 26 26">
<g fill="#bdbdbd">
<circle cx="13" cy="13" r="8.5"/>
<rect x="10.5" y="1.5" width="5" height="23"/><rect x="10.5" y="1.5" width="5" height="23" transform="rotate(60 13 13)"/><rect x="10.5" y="1.5" width="5" height="23" transform="rotate(120 13 13)"/>
</g>
<circle cx="13" cy="13" r="4" fill="#1f5c57"/>
</svg>
</body></html>
